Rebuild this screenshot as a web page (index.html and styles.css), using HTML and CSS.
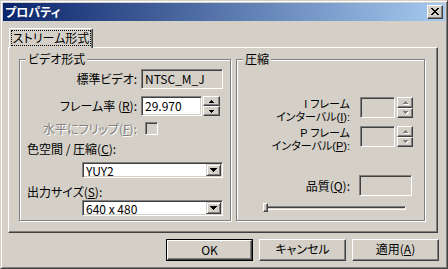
FILE: index.html
```html
<!DOCTYPE html>
<html lang="ja">
<head>
    <meta charset="UTF-8">
    <title>プロパティ</title>
    <link rel="stylesheet" href="styles.css">
</head>
<body>
    <div class="dialog">
        <div class="caption">
            <span class="caption-title">プロパティ</span>
            <span class="caption-close">
                <svg width="8" height="7" viewBox="0 0 8 7" shape-rendering="crispEdges"><path d="M0 0h2v1H0zM6 0h2v1H6zM1 1h2v1H1zM5 1h2v1H5zM2 2h4v1H2zM3 3h2v1H3zM2 4h4v1H2zM1 5h2v1H1zM5 5h2v1H5zM0 6h2v1H0zM6 6h2v1H6z" fill="#000"/></svg>
            </span>
        </div>

        <div class="client">
            <div class="tabs">
                <div class="tab selected"><span class="focus">ストリーム形式</span></div>
            </div>

            <div class="sheet">
                <!-- video format group -->
                <div class="group group-video">
                    <span class="legend">ビデオ形式</span>

                    <div class="row row-std">
                        <span class="lbl">標準ビデオ:</span>
                        <span class="edit readonly std-edit">NTSC_M_J</span>
                    </div>

                    <div class="row row-rate">
                        <span class="lbl">フレーム率 (<u>R</u>):</span>
                        <span class="edit rate-edit">29.970</span>
                        <span class="spin">
                            <span class="spin-btn"><svg width="5" height="3" viewBox="0 0 5 3" shape-rendering="crispEdges"><path d="M2 0h1v1h1v1h1v1H0V2h1V1h1z" fill="#000"/></svg></span>
                            <span class="spin-btn"><svg width="5" height="3" viewBox="0 0 5 3" shape-rendering="crispEdges"><path d="M0 0h5v1H4v1H3v1H2V2H1V1H0z" fill="#000"/></svg></span>
                        </span>
                    </div>

                    <div class="row row-flip">
                        <span class="lbl disabled">水平にフリップ(<u>F</u>):</span>
                        <span class="check"></span>
                    </div>

                    <div class="row row-caption">色空間 / 圧縮(<u>C</u>):</div>
                    <div class="row row-combo">
                        <span class="combo">
                            <span class="combo-text">YUY2</span>
                            <span class="combo-btn"><svg width="7" height="4" viewBox="0 0 7 4" shape-rendering="crispEdges"><path d="M0 0h7v1H6v1H5v1H4v1H3V3H2V2H1V1H0z" fill="#000"/></svg></span>
                        </span>
                    </div>

                    <div class="row row-caption">出力サイズ(<u>S</u>):</div>
                    <div class="row row-combo row-size">
                        <span class="combo">
                            <span class="combo-text">640 x 480</span>
                            <span class="combo-btn"><svg width="7" height="4" viewBox="0 0 7 4" shape-rendering="crispEdges"><path d="M0 0h7v1H6v1H5v1H4v1H3V3H2V2H1V1H0z" fill="#000"/></svg></span>
                        </span>
                    </div>
                </div>

                <!-- compression group -->
                <div class="group group-comp">
                    <span class="legend">圧縮</span>

                    <div class="row row-frame row-iframe">
                        <span class="lbl2">
                            <span class="line">I フレーム</span>
                            <span class="line">インターバル(<u>I</u>):</span>
                        </span>
                        <span class="edit off frame-edit"></span>
                        <span class="spin off">
                            <span class="spin-btn"><svg width="5" height="3" viewBox="0 0 5 3" shape-rendering="crispEdges"><path d="M2 0h1v1h1v1h1v1H0V2h1V1h1z"/></svg></span>
                            <span class="spin-btn"><svg width="5" height="3" viewBox="0 0 5 3" shape-rendering="crispEdges"><path d="M0 0h5v1H4v1H3v1H2V2H1V1H0z"/></svg></span>
                        </span>
                    </div>

                    <div class="row row-frame row-pframe">
                        <span class="lbl2">
                            <span class="line">P フレーム</span>
                            <span class="line">インターバル(<u>P</u>):</span>
                        </span>
                        <span class="edit off frame-edit"></span>
                        <span class="spin off">
                            <span class="spin-btn"><svg width="5" height="3" viewBox="0 0 5 3" shape-rendering="crispEdges"><path d="M2 0h1v1h1v1h1v1H0V2h1V1h1z"/></svg></span>
                            <span class="spin-btn"><svg width="5" height="3" viewBox="0 0 5 3" shape-rendering="crispEdges"><path d="M0 0h5v1H4v1H3v1H2V2H1V1H0z"/></svg></span>
                        </span>
                    </div>

                    <div class="row row-quality">
                        <span class="lbl-q">品質(<u>Q</u>):</span>
                        <span class="edit off quality-edit"></span>
                    </div>

                    <div class="slider">
                        <span class="slider-thumb"></span>
                    </div>
                </div>
            </div>

            <div class="buttons">
                <span class="btn default"><span class="btn-face">OK</span></span>
                <span class="btn"><span class="btn-face">キャンセル</span></span>
                <span class="btn"><span class="btn-face">適用(<u>A</u>)</span></span>
            </div>
        </div>
    </div>
</body>
</html>
```

FILE: styles.css
```css
/* Windows 2000 style dialog */
body {
    margin: 0;
    background-color: #d4d0c8;
    font-family: "Noto Sans CJK JP", sans-serif;
    font-size: 12px;
    font-feature-settings: "palt";
    color: #000;
}

u {
    text-underline-offset: 1px;
}

.dialog {
    width: 448px;
    height: 269px;
    box-sizing: border-box;
    border: 1px solid;
    border-color: #d4d0c8 #404040 #404040 #d4d0c8;
    box-shadow: inset 1px 1px #fff, inset -1px -1px #808080;
    padding: 2px;
    display: flex;
    flex-direction: column;
}

/* Title bar */
.caption {
    height: 18px;
    background: linear-gradient(to right, #0a246a, #a6caf0);
    display: flex;
    align-items: center;
    justify-content: space-between;
    padding: 0 2px;
}

.caption-title {
    color: #fff;
    font-weight: bold;
    line-height: 18px;
}

.caption-close {
    width: 16px;
    height: 14px;
    box-sizing: border-box;
    background-color: #d4d0c8;
    border: 1px solid;
    border-color: #fff #404040 #404040 #fff;
    box-shadow: inset -1px -1px #808080;
    display: flex;
    align-items: center;
    justify-content: center;
    padding: 0 1px 1px 0;
}

.caption-close svg {
    display: block;
}

/* Client area */
.client {
    flex: 1;
    padding: 7px 7px 0 5px;
}

.tabs {
    display: flex;
    height: 19px;
}

.tab {
    position: relative;
    z-index: 1;
    width: 84px;
    height: 20px;
    box-sizing: border-box;
    margin-left: 1px;
    background-color: #d4d0c8;
    border: 1px solid;
    border-bottom: none;
    border-color: #fff #404040 #d4d0c8 #fff;
    box-shadow: inset -1px 0 #808080;
    border-radius: 2px 2px 0 0;
    padding: 1px 1px 0 1px;
}

.focus {
    display: block;
    height: 16px;
    border: 1px dotted #000;
    box-sizing: border-box;
    line-height: 14px;
    text-align: center;
}

.sheet {
    height: 186px;
    box-sizing: border-box;
    border: 1px solid;
    border-color: #fff #404040 #404040 #fff;
    box-shadow: inset -1px -1px #808080;
    padding: 11px 0 0 10px;
    display: flex;
    align-items: flex-start;
}

/* Group boxes */
.group {
    position: relative;
    height: 162px;
    box-sizing: border-box;
    border: 1px solid #808080;
    box-shadow: inset 1px 1px #fff, 1px 1px #fff;
}

.group-video {
    width: 212px;
}

.group-comp {
    width: 189px;
    margin-left: 5px;
}

.legend {
    position: absolute;
    top: -8px;
    left: 6px;
    padding: 0 2px;
    line-height: 14px;
    background-color: #d4d0c8;
}

.row {
    display: flex;
    align-items: center;
}

.lbl {
    width: 117px;
    margin-right: 4px;
    text-align: right;
    line-height: 14px;
    white-space: nowrap;
}

.disabled {
    color: #808080;
    text-shadow: 1px 1px #fff;
}

.row-std {
    margin-top: 9px;
    height: 20px;
}

.row-rate {
    margin-top: 7px;
    height: 20px;
}

.row-flip {
    margin-top: 6px;
    height: 13px;
}

.row-caption {
    margin-top: 7px;
    height: 13px;
    padding-left: 7px;
    line-height: 13px;
}

.row-combo {
    margin-top: 7px;
    padding-left: 62px;
}

.row-size {
    margin-top: 2px;
}

/* Edit boxes */
.edit {
    box-sizing: border-box;
    height: 20px;
    border: 1px solid;
    border-color: #808080 #fff #fff #808080;
    box-shadow: inset 1px 1px #404040, inset -1px -1px #d4d0c8;
    background-color: #fff;
    padding: 0 3px;
    line-height: 18px;
    white-space: nowrap;
}

.readonly,
.off {
    background-color: #d4d0c8;
}

.std-edit {
    width: 82px;
}

.rate-edit {
    width: 61px;
}

/* Spin buttons */
.spin {
    display: flex;
    flex-direction: column;
    width: 17px;
    height: 20px;
    margin-left: 1px;
}

.spin-btn {
    flex: 1;
    box-sizing: border-box;
    border: 1px solid;
    border-color: #fff #404040 #404040 #fff;
    box-shadow: inset -1px -1px #808080;
    display: flex;
    align-items: center;
    justify-content: center;
}

.spin-btn svg {
    display: block;
}

.spin.off .spin-btn svg {
    fill: #808080;
    filter: drop-shadow(1px 1px 0 #fff);
}

/* Check box */
.check {
    width: 13px;
    height: 13px;
    box-sizing: border-box;
    margin-left: 4px;
    border: 1px solid;
    border-color: #808080 #fff #fff #808080;
    box-shadow: inset 1px 1px #404040, inset -1px -1px #d4d0c8;
}

/* Combo boxes */
.combo {
    display: flex;
    width: 141px;
    height: 16px;
    box-sizing: border-box;
    border: 1px solid;
    border-color: #808080 #fff #fff #808080;
    box-shadow: inset 1px 1px #404040, inset -1px -1px #d4d0c8;
    background-color: #fff;
    padding: 1px;
}

.combo-text {
    flex: 1;
    padding-left: 2px;
    line-height: 13px;
}

.combo-btn {
    width: 15px;
    box-sizing: border-box;
    background-color: #d4d0c8;
    border: 1px solid;
    border-color: #d4d0c8 #404040 #404040 #d4d0c8;
    box-shadow: inset 1px 1px #fff, inset -1px -1px #808080;
    display: flex;
    align-items: center;
    justify-content: center;
}

/* Compression group */
.lbl2 {
    display: flex;
    flex-direction: column;
    align-items: flex-end;
    width: 113px;
    margin: 1px 10px 0 0;
    font-family: "Liberation Sans", "Noto Sans CJK JP", sans-serif;
    font-size: 11px;
    line-height: 13px;
    white-space: nowrap;
}

.row-frame {
    align-items: flex-start;
    height: 21px;
}

.row-iframe {
    margin-top: 37px;
}

.row-pframe {
    margin-top: 8px;
}

.frame-edit {
    width: 35px;
    height: 21px;
}

.row-frame .spin {
    width: 16px;
    height: 21px;
    margin-left: 2px;
}

.row-quality {
    margin-top: 28px;
    height: 21px;
}

.lbl-q {
    width: 113px;
    margin-right: 9px;
    text-align: right;
    line-height: 14px;
}

.quality-edit {
    width: 53px;
    height: 21px;
}

.slider {
    position: relative;
    margin: 10px 0 0 26px;
    width: 143px;
    height: 4px;
    box-sizing: border-box;
    border: 1px solid;
    border-color: #808080 #fff #fff #808080;
    box-shadow: inset 1px 1px #404040;
}

.slider-thumb {
    position: absolute;
    left: -1px;
    top: -4px;
    width: 5px;
    height: 9px;
    box-sizing: border-box;
    background-color: #d4d0c8;
    border: 1px solid;
    border-color: #fff #404040 #404040 #fff;
    box-shadow: inset -1px -1px #808080;
}

/* Bottom buttons */
.buttons {
    display: flex;
    justify-content: flex-end;
    gap: 6px;
    margin-top: 6px;
    margin-right: -1px;
}

.btn {
    width: 87px;
    height: 22px;
    box-sizing: border-box;
    display: flex;
}

.btn.default {
    border: 1px solid #000;
}

.btn-face {
    flex: 1;
    box-sizing: border-box;
    border: 1px solid;
    border-color: #fff #404040 #404040 #fff;
    box-shadow: inset -1px -1px #808080;
    text-align: center;
    line-height: 18px;
}
```
